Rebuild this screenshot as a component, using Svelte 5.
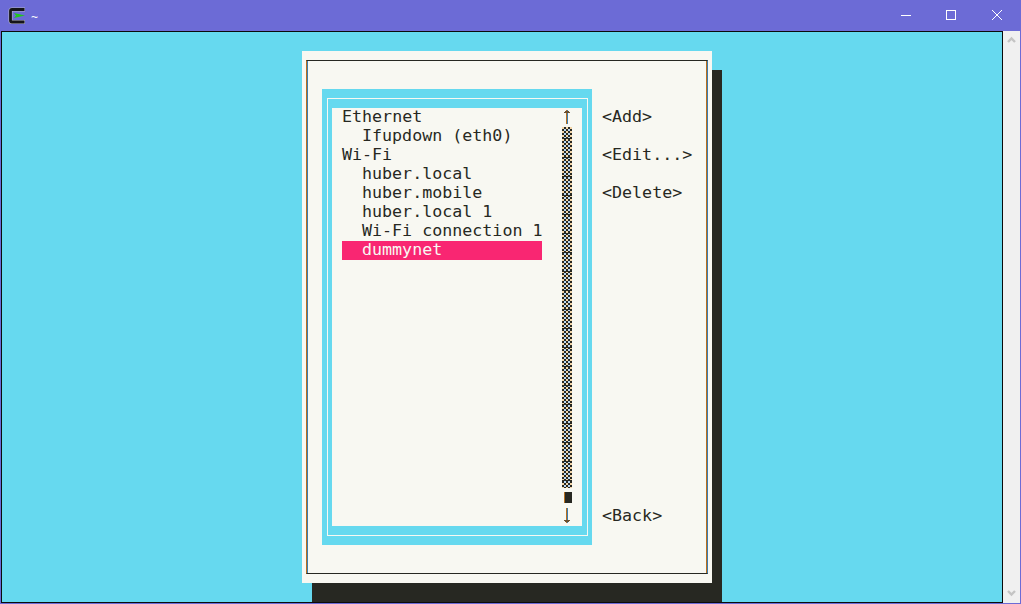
<script>
  const rows = [
    { label: 'Ethernet', indent: false },
    { label: 'Ifupdown (eth0)', indent: true },
    { label: 'Wi-Fi', indent: false },
    { label: 'huber.local', indent: true },
    { label: 'huber.mobile', indent: true },
    { label: 'huber.local 1', indent: true },
    { label: 'Wi-Fi connection 1', indent: true },
    { label: 'dummynet', indent: true, selected: true }
  ];
</script>

<div class="window">
  <header class="titlebar">
    <div class="title">
      <svg class="appicon" width="18" height="18" viewBox="0 0 18 18" aria-hidden="true">
        <path d="M17 2.5 H4 Q2.5 2.5 2.5 4 V13.5 Q2.5 15 4 15 H17" fill="none" stroke="#b4b4c8" stroke-width="4"/>
        <path d="M16.5 2.5 H4 Q2.5 2.5 2.5 4 V13.5 Q2.5 15 4 15 H16.5" fill="none" stroke="#15151a" stroke-width="2.8"/>
        <path d="M6 6 L17 8.6 L6 11 L8 8.6 Z" fill="#22c51f"/>
      </svg>
      <span class="tilde">~</span>
    </div>
    <div class="controls">
      <svg width="12" height="12" viewBox="0 0 12 12" aria-hidden="true"><path d="M1 6.5 H11" stroke="#fff" fill="none"/></svg>
      <svg width="12" height="12" viewBox="0 0 12 12" aria-hidden="true"><rect x="1.5" y="1.5" width="9" height="9" stroke="#fff" fill="none"/></svg>
      <svg width="12" height="12" viewBox="0 0 12 12" aria-hidden="true"><path d="M1 1 L11 11 M11 1 L1 11" stroke="#fff" fill="none"/></svg>
    </div>
  </header>

  <div class="client">
    <main class="terminal">
      <section class="dialog">
        <div class="frame">
          <div class="listbox">
            <div class="listline">
              <div class="list">
                <ul class="rows">
                  {#each rows as row}
                    <li class:indent={row.indent} class:selected={row.selected}>{row.label}</li>
                  {/each}
                </ul>
                <div class="scroll">
                  <svg width="10" height="19" viewBox="0 0 10 19" aria-hidden="true">
                    <rect x="4" y="2" width="1" height="14" fill="#b8701f"/>
                    <rect x="5" y="2" width="1" height="14" fill="#3d7cb0"/>
                    <path d="M2 4.5 H8 M3 3.5 H7" stroke="#6b5030" fill="none"/>
                  </svg>
                  <div class="track"></div>
                  <div class="thumbcell"><div class="thumb"></div></div>
                  <svg width="10" height="19" viewBox="0 0 10 19" aria-hidden="true">
                    <rect x="4" y="1" width="1" height="15" fill="#b8701f"/>
                    <rect x="5" y="1" width="1" height="15" fill="#3d7cb0"/>
                    <path d="M2 13.5 H8 M3 14.5 H7" stroke="#6b5030" fill="none"/>
                  </svg>
                </div>
              </div>
            </div>
          </div>
          <div class="actions">
            <span class="a1">&lt;Add&gt;</span>
            <span class="a2">&lt;Edit...&gt;</span>
            <span class="a3">&lt;Delete&gt;</span>
            <span class="a4">&lt;Back&gt;</span>
          </div>
        </div>
      </section>
    </main>
    <aside class="vscroll">
      <svg width="17" height="17" viewBox="0 0 17 17" aria-hidden="true"><path d="M5 10 L8.5 6.5 L12 10" stroke="#c4c4c4" stroke-width="2.4" fill="none"/></svg>
      <svg width="17" height="17" viewBox="0 0 17 17" aria-hidden="true"><path d="M5 7 L8.5 10.5 L12 7" stroke="#c4c4c4" stroke-width="2.4" fill="none"/></svg>
    </aside>
  </div>
</div>

<style>
  :global(body) {
    margin: 0;
    background: #6c6bd6;
  }
  .window {
    width: 1021px;
    height: 604px;
    display: flex;
    flex-direction: column;
    background: #6c6bd6;
    overflow: hidden;
  }
  .titlebar {
    height: 31px;
    flex: none;
    display: flex;
    align-items: center;
    justify-content: space-between;
  }
  .title {
    display: flex;
    align-items: center;
    padding-left: 8px;
    gap: 5px;
  }
  .appicon { display: block; }
  .tilde {
    color: #fff;
    font: 12px "Liberation Sans", sans-serif;
    line-height: 18px;
    padding-top: 2px;
  }
  .controls {
    display: flex;
    gap: 34px;
    padding-right: 18px;
    padding-bottom: 1px;
  }
  .controls svg { display: block; }
  .controls svg:first-child { margin-right: -1px; }
  .client {
    flex: none;
    height: 572px;
    margin: 0 1px 1px;
    display: flex;
  }
  .terminal {
    width: 1000px;
    border: 1px solid #0b0b0b;
    background: #66d9ef;
    font-family: "DejaVu Sans Mono", monospace;
    font-size: 16.67px;
    line-height: 17px;
    color: #272822;
  }
  .vscroll {
    width: 17px;
    background: #f0f0f0;
    display: flex;
    flex-direction: column;
    justify-content: space-between;
    padding-bottom: 2px;
    box-sizing: border-box;
  }
  .vscroll svg { display: block; margin-top: 1px; }
  .dialog {
    width: 410px;
    height: 532px;
    margin: 19px 0 0 300px;
    padding: 9px 4px;
    box-sizing: border-box;
    background: #f8f8f2;
    box-shadow: 10px 19px 0 #272822;
  }
  .frame {
    height: 514px;
    box-sizing: border-box;
    border-top: 1px solid #272822;
    border-bottom: 1px solid #272822;
    border-left: 1px solid #b8701f;
    border-right: 1px solid #3d7cb0;
    box-shadow: inset 1px 0 #3d7cb0, inset -1px 0 #b8701f;
    padding: 28px 0 0 15px;
    display: flex;
    gap: 10px;
    align-items: flex-start;
  }
  .listbox {
    width: 270px;
    height: 456px;
    box-sizing: border-box;
    background: #66d9ef;
    padding: 9px 4px 9px 5px;
  }
  .listline {
    height: 100%;
    box-sizing: border-box;
    border: 1px solid #f8f8f2;
    padding: 9px 5px 9px 4px;
  }
  .list {
    height: 418px;
    background: #f8f8f2;
    padding-left: 10px;
    display: flex;
    gap: 20px;
  }
  .rows {
    width: 200px;
    margin: 0;
    padding: 0;
    list-style: none;
  }
  .rows li {
    height: 19px;
    white-space: pre;
  }
  .rows li.indent { padding-left: 20px; }
  .rows li.selected {
    background: #f92672;
    color: #f8f8f2;
  }
  .scroll {
    width: 10px;
    display: flex;
    flex-direction: column;
  }
  .scroll svg { display: block; flex: none; }
  .track {
    height: 361px;
    flex: none;
    background-color: #f8f8f2;
    background-image:
      repeating-linear-gradient(to bottom, transparent 0 11px, #272822 11px 12px, transparent 12px 19px),
      repeating-conic-gradient(#272822 0 25%, transparent 0 50%),
      linear-gradient(to right, #f4d6a8 0 50%, #bcd8f2 50% 100%);
    background-size: 100% 100%, 4px 4px, 4px 4px;
  }
  .thumbcell {
    height: 19px;
    flex: none;
    padding: 4px 0 4px 2px;
    box-sizing: border-box;
  }
  .thumb {
    height: 11px;
    background: #272822;
    border-left: 1px solid #b8701f;
  }
  .actions {
    width: 100px;
    height: 418px;
    margin-top: 19px;
    display: grid;
    grid-template-rows: repeat(22, 19px);
    white-space: pre;
  }
  .a1 { grid-row: 1; }
  .a2 { grid-row: 3; }
  .a3 { grid-row: 5; }
  .a4 { grid-row: 22; }
</style>
